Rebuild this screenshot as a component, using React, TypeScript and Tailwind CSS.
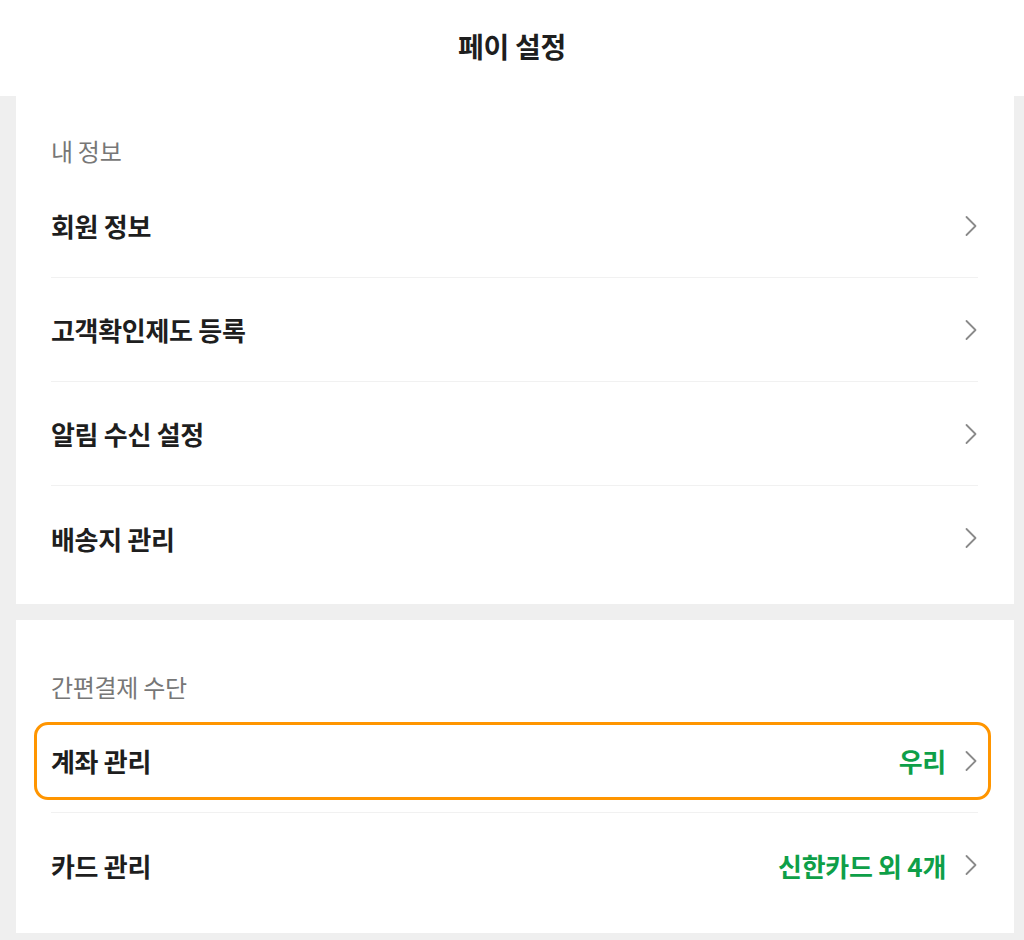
import React from "react";

const font = { fontFamily: '"Noto Sans CJK KR", "Noto Sans", sans-serif' };

function Chevron() {
  return (
    <svg width="14" height="22" viewBox="0 0 14 22" fill="none" className="shrink-0">
      <path d="M2.5 2 L11.5 11 L2.5 20" stroke="#8a8a8a" strokeWidth="1.8" strokeLinecap="round" strokeLinejoin="round" />
    </svg>
  );
}

type Row = { label: string; value?: string; highlight?: boolean };

function MenuRow({ row, last }: { row: Row; last: boolean }) {
  return (
    <div className={`relative flex h-[104px] items-center justify-between ${last ? "" : "border-b border-[#f1f1f1]"}`}>
      {row.highlight && (
        <span className="pointer-events-none absolute -left-[17px] -right-[13px] top-[13px] bottom-[12px] rounded-[14px] border-[3px] border-[#ff9500]" />
      )}
      <span className="text-[26px] font-bold tracking-[-0.3px] text-[#1e1e1e]">{row.label}</span>
      <div className="flex items-center gap-[18px]">
        {row.value && <span className="text-[26px] font-bold tracking-[-0.3px] text-[#0e9f48]">{row.value}</span>}
        <Chevron />
      </div>
    </div>
  );
}

function Section({ title, rows, top, gap, bottom }: { title: string; rows: Row[]; top: string; gap: string; bottom: string }) {
  return (
    <section className={`bg-white pl-[35px] pr-[36px] ${top} ${bottom}`}>
      <h2 className="flex h-[40px] items-center text-[24px] tracking-[-0.3px] text-[#777777]">{title}</h2>
      <div className={gap}>
        {rows.map((r, i) => (
          <MenuRow key={r.label} row={r} last={i === rows.length - 1} />
        ))}
      </div>
    </section>
  );
}

export default function App() {
  return (
    <div className="min-h-[940px] bg-[#efefef]" style={font}>
      <header className="flex h-[96px] items-center justify-center bg-white pb-[4px]">
        <h1 className="text-[28px] font-bold tracking-[-0.3px] text-[#1e1e1e]">페이 설정</h1>
      </header>
      <div className="flex flex-col gap-[16px] pl-[16px] pr-[10px] pb-[7px]">
        <Section
          title="내 정보"
          top="pt-[35px]"
          gap="mt-[3px]"
          bottom="pb-[14px]"
          rows={[
            { label: "회원 정보" },
            { label: "고객확인제도 등록" },
            { label: "알림 수신 설정" },
            { label: "배송지 관리" },
          ]}
        />
        <Section
          title="간편결제 수단"
          top="pt-[47px]"
          gap="mt-[2px]"
          bottom="pb-[16px]"
          rows={[
            { label: "계좌 관리", value: "우리", highlight: true },
            { label: "카드 관리", value: "신한카드 외 4개" },
          ]}
        />
      </div>
    </div>
  );
}
